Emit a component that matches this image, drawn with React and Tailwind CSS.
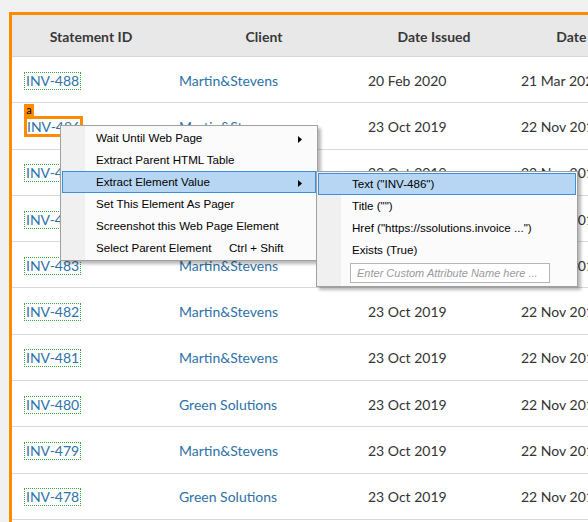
const rows = [
  { id: 'INV-488', client: 'Martin&Stevens', issued: '20 Feb 2020', due: '21 Mar 2020' },
  { id: 'INV-486', client: 'Martin&Stevens', issued: '23 Oct 2019', due: '22 Nov 2019', selected: true },
  { id: 'INV-485', client: 'Martin&Stevens', issued: '23 Oct 2019', due: '22 Nov 2019' },
  { id: 'INV-484', client: 'Martin&Stevens', issued: '23 Oct 2019', due: '22 Nov 2019' },
  { id: 'INV-483', client: 'Martin&Stevens', issued: '23 Oct 2019', due: '22 Nov 2019' },
  { id: 'INV-482', client: 'Martin&Stevens', issued: '23 Oct 2019', due: '22 Nov 2019' },
  { id: 'INV-481', client: 'Martin&Stevens', issued: '23 Oct 2019', due: '22 Nov 2019' },
  { id: 'INV-480', client: 'Green Solutions', issued: '23 Oct 2019', due: '22 Nov 2019' },
  { id: 'INV-479', client: 'Martin&Stevens', issued: '23 Oct 2019', due: '22 Nov 2019' },
  { id: 'INV-478', client: 'Green Solutions', issued: '23 Oct 2019', due: '22 Nov 2019' },
  { id: 'INV-477', client: 'Green Solutions', issued: '23 Oct 2019', due: '22 Nov 2019' },
];

const menuItems = [
  { label: 'Wait Until Web Page', sub: true },
  { label: 'Extract Parent HTML Table' },
  { label: 'Extract Element Value', sub: true, active: true },
  { label: 'Set This Element As Pager' },
  { label: 'Screenshot this Web Page Element' },
  { label: 'Select Parent Element', shortcut: 'Ctrl + Shift' },
];

const subItems = [
  { label: 'Text ("INV-486")', active: true },
  { label: 'Title ("")' },
  { label: 'Href ("https://ssolutions.invoice ...")' },
  { label: 'Exists (True)' },
];

function Arrow() {
  return (
    <svg width="4" height="7" viewBox="0 0 4 7" className="absolute right-[13px] top-[8px]">
      <path d="M0 0 L4 3.5 L0 7 Z" fill="#000" />
    </svg>
  );
}

function ContextMenu() {
  return (
    <div
      className="absolute left-[60px] top-[125px] w-[258px] border border-[#a0a0a0] bg-[#fbfbfb] py-px shadow-[3px_3px_3px_rgba(0,0,0,0.28)]"
      style={{ fontFamily: '"Liberation Sans", Arial, sans-serif' }}
    >
      <div className="absolute bottom-0 left-0 top-0 w-[24px] bg-[#f0f0f0]" />
      {menuItems.map((item) => (
        <div
          key={item.label}
          className={`relative mx-px flex h-[22px] items-center border pl-[33px] text-[11.6px] text-black ${
            item.active ? 'border-[#3c8fdb] bg-[#b7d6f3]' : 'border-transparent'
          }`}
        >
          <span>{item.label}</span>
          {item.shortcut ? <span className="absolute left-[166px]">{item.shortcut}</span> : null}
          {item.sub ? <Arrow /> : null}
        </div>
      ))}
    </div>
  );
}

function SubMenu() {
  return (
    <div
      className="absolute left-[316px] top-[171px] w-[262px] border border-[#a0a0a0] bg-[#fbfbfb] py-px shadow-[3px_3px_3px_rgba(0,0,0,0.28)]"
      style={{ fontFamily: '"Liberation Sans", Arial, sans-serif' }}
    >
      <div className="absolute bottom-0 left-0 top-0 w-[24px] bg-[#f0f0f0]" />
      {subItems.map((item) => (
        <div
          key={item.label}
          className={`relative mx-px flex h-[22px] items-center border pl-[33px] text-[11.6px] text-black ${
            item.active ? 'border-[#3c8fdb] bg-[#b7d6f3]' : 'border-transparent'
          }`}
        >
          {item.label}
        </div>
      ))}
      <div className="relative flex h-[24px] items-center pl-[33px]">
        <div className="flex h-[20px] w-[200px] items-center border border-[#b5b5b5] bg-white px-[6px] text-[11px] italic text-[#9a9a9a]">
          Enter Custom Attribute Name here ...
        </div>
      </div>
    </div>
  );
}

export default function App() {
  return (
    <div
      className="relative h-[522px] w-[588px] overflow-hidden bg-[#f1f1f1]"
      style={{ fontFamily: 'Lato, "Liberation Sans", sans-serif' }}
    >
      <div className="ml-[9px] mt-[12px] w-[720px] border-[3px] border-[#ff8c00] bg-white">
        <div className="flex h-[42px] items-center border-b border-[#d6d6d6] bg-[#e8e8e8] pt-[2px] text-[14px] font-bold text-[#383838]">
          <div className="w-[158px] text-center">Statement ID</div>
          <div className="w-[188px] text-center">Client</div>
          <div className="w-[152px] text-center">Date Issued</div>
          <div className="w-[152px] text-center">Date Due</div>
        </div>
        {rows.map((row) => (
          <div key={row.id} className="flex h-[46.3px] items-center border-b border-[#d9d9d9] pt-px text-[14px]">
            <div className="w-[158px] pl-[12px]">
              {row.selected ? (
                <span className="relative inline-block border-[3px] border-[#ff8c00] leading-[15px] text-[#2d72a8]">
                  <span className="absolute -left-[3px] -top-[15px] h-[12px] w-[10px] bg-[#ff8c00] text-center text-[11px] leading-[11px] text-black">
                    a
                  </span>
                  {row.id}
                </span>
              ) : (
                <span className="inline-block border border-dotted border-[#3aa53a] px-[1px] leading-[16px] text-[#2d72a8]">
                  {row.id}
                </span>
              )}
            </div>
            <div className="w-[188px] pl-[9px] text-[#2d72a8]">{row.client}</div>
            <div className="w-[152px] pl-[10px] text-[#333]">{row.issued}</div>
            <div className="w-[152px] pl-[11px] text-[#333]">{row.due}</div>
          </div>
        ))}
      </div>
      <ContextMenu />
      <SubMenu />
    </div>
  );
}
